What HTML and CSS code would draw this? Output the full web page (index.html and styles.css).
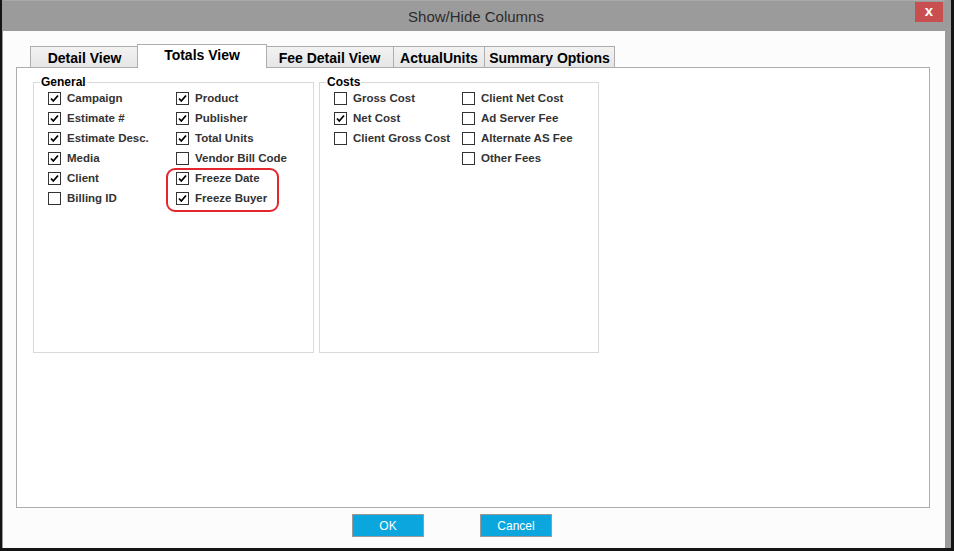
FILE: index.html
```html
<!DOCTYPE html>
<html lang="en">
<head>
    <meta charset="UTF-8">
    <title>Show/Hide Columns</title>
    <link rel="stylesheet" href="styles.css">
</head>
<body>
    <div class="window">
        <div class="titlebar">
            <span class="title">Show/Hide Columns</span>
            <span class="close">x</span>
        </div>

        <div class="client">
            <div class="tabs">
                <div class="tab tab-detail">Detail View</div>
                <div class="tab tab-totals active">Totals View</div>
                <div class="tab tab-fee">Fee Detail View</div>
                <div class="tab tab-units">ActualUnits</div>
                <div class="tab tab-summary">Summary Options</div>
            </div>

            <div class="panel">
                <fieldset class="group group-general">
                    <legend>General</legend>
                    <div class="cols">
                        <div class="col">
                            <div class="check on"><span class="box"></span>Campaign</div>
                            <div class="check on"><span class="box"></span>Estimate #</div>
                            <div class="check on"><span class="box"></span>Estimate Desc.</div>
                            <div class="check on"><span class="box"></span>Media</div>
                            <div class="check on"><span class="box"></span>Client</div>
                            <div class="check"><span class="box"></span>Billing ID</div>
                        </div>
                        <div class="col">
                            <div class="check on"><span class="box"></span>Product</div>
                            <div class="check on"><span class="box"></span>Publisher</div>
                            <div class="check on"><span class="box"></span>Total Units</div>
                            <div class="check"><span class="box"></span>Vendor Bill Code</div>
                            <div class="check on"><span class="box"></span>Freeze Date</div>
                            <div class="check on"><span class="box"></span>Freeze Buyer</div>
                        </div>
                    </div>
                    <div class="highlight"></div>
                </fieldset>

                <fieldset class="group group-costs">
                    <legend>Costs</legend>
                    <div class="cols">
                        <div class="col">
                            <div class="check"><span class="box"></span>Gross Cost</div>
                            <div class="check on"><span class="box"></span>Net Cost</div>
                            <div class="check"><span class="box"></span>Client Gross Cost</div>
                        </div>
                        <div class="col">
                            <div class="check"><span class="box"></span>Client Net Cost</div>
                            <div class="check"><span class="box"></span>Ad Server Fee</div>
                            <div class="check"><span class="box"></span>Alternate AS Fee</div>
                            <div class="check"><span class="box"></span>Other Fees</div>
                        </div>
                    </div>
                </fieldset>
            </div>

            <div class="footer">
                <button class="btn">OK</button>
                <button class="btn">Cancel</button>
            </div>
        </div>
    </div>
</body>
</html>
```

FILE: styles.css
```css
body {
    margin: 0;
    font-family: 'Liberation Sans', Arial, sans-serif;
    background: #141414;
}
.window {
    width: 954px;
    height: 551px;
    box-sizing: border-box;
    border: solid #141414;
    border-width: 0 3px 3px 2px;
    padding: 0 6px 0 1px;
    background: #9b9b9b;
    display: flex;
    flex-direction: column;
}
.titlebar {
    height: 31px;
    flex: none;
    display: flex;
    align-items: center;
    justify-content: center;
    position: relative;
    border-top: 1px solid #a9a9a9;
    box-sizing: border-box;
}
.title {
    font-size: 15px;
    color: #2b2b2b;
    padding-top: 1px;
    margin-left: 4px;
}
.close {
    position: absolute;
    right: 2px;
    top: 1px;
    width: 28px;
    height: 20px;
    background: #c74f4f;
    color: #fff;
    font-size: 15px;
    font-weight: bold;
    text-align: center;
    line-height: 18px;
}
.client {
    flex: 1;
    background: #fcfcfc;
    padding: 13px 15px 0 13px;
    display: flex;
    flex-direction: column;
}
.tabs {
    display: flex;
    align-items: flex-end;
    height: 24px;
    padding-left: 14px;
    margin-bottom: -1px;
    position: relative;
    z-index: 1;
}
.tab {
    height: 21px;
    margin-bottom: 1px;
    box-sizing: border-box;
    border: 1px solid #adadad;
    border-bottom: none;
    margin-right: -1px;
    background: linear-gradient(#f2f2f2, #e6e6e6);
    font-size: 14px;
    font-weight: bold;
    color: #000;
    text-align: center;
    line-height: 20px;
    padding-top: 1px;
}
.tab.active {
    height: 24px;
    margin-bottom: 0;
    background: #fff;
    line-height: 19px;
    padding-top: 1px;
    margin-left: -1px;
    margin-right: -2px;
    position: relative;
}
.tab-detail { width: 109px; }
.tab-totals { width: 130px; }
.tab-fee { width: 129px; }
.tab-units { width: 92px; }
.tab-summary { width: 131px; }
.panel {
    height: 441px;
    box-sizing: border-box;
    border: 1px solid #adadad;
    background: #fff;
    padding: 7px 0 0 16px;
    display: flex;
    align-items: flex-start;
    gap: 5px;
}
.group {
    margin: 0;
    padding: 0 0 0 14px;
    border: 1px solid #d9d9d9;
    height: 278px;
    box-sizing: border-box;
    position: relative;
}
.group-general { width: 281px; }
.group-costs { width: 280px; }
legend {
    font-size: 12px;
    font-weight: bold;
    color: #000;
    line-height: 14px;
    padding: 0 1px;
    margin-left: -8px;
}
.cols {
    display: flex;
    margin-top: -1px;
}
.col {
    width: 128px;
}
.check {
    height: 20px;
    display: flex;
    align-items: center;
    font-size: 11.5px;
    font-weight: bold;
    color: #333;
    white-space: nowrap;
}
.box {
    width: 13px;
    height: 13px;
    box-sizing: border-box;
    border: 1px solid #333;
    background: #fff;
    margin-right: 6px;
    flex: none;
}
.check.on .box {
    background: #fff url("data:image/svg+xml,%3Csvg xmlns='http://www.w3.org/2000/svg' width='11' height='11' viewBox='0 0 11 11'%3E%3Cpath d='M2 5.5 L4.3 8 L9 2.5' fill='none' stroke='%23000' stroke-width='1.8'/%3E%3C/svg%3E") center / 11px 11px no-repeat;
}
.highlight {
    position: absolute;
    left: 132px;
    top: 79px;
    width: 113px;
    height: 44px;
    box-sizing: border-box;
    border: 2px solid #e3262b;
    border-radius: 9px;
}
.footer {
    display: flex;
    padding: 6px 0 0 336px;
    gap: 56px;
}
.btn {
    width: 72px;
    height: 23px;
    background: #0aa6dd;
    border: 1px solid #9a9a9a;
    color: #fff;
    font-family: 'Liberation Sans', Arial, sans-serif;
    font-size: 12px;
    padding: 0;
}
```
